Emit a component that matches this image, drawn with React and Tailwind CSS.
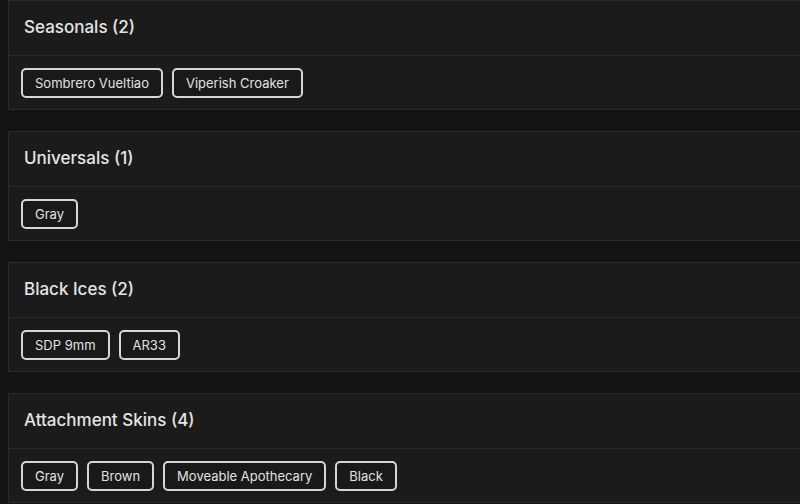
const sections = [
  { title: 'Seasonals', items: ['Sombrero Vueltiao', 'Viperish Croaker'] },
  { title: 'Universals', items: ['Gray'] },
  { title: 'Black Ices', items: ['SDP 9mm', 'AR33'] },
  { title: 'Attachment Skins', items: ['Gray', 'Brown', 'Moveable Apothecary', 'Black'] },
];

const App = () => {
  return (
    <div
      className="h-[504px] w-full overflow-hidden bg-[#131313] pl-2"
      style={{ fontFamily: 'Inter, "Noto Sans", sans-serif' }}
    >
      <div className="flex w-[820px] flex-col gap-[21px]">
        {sections.map((section) => (
          <div key={section.title} className="border border-[#2a2a2a] bg-[#1b1b1b]">
            {/* Header */}
            <div className="flex h-[55px] items-center border-b border-[#2a2a2a] px-[15px]">
              <h2 className="text-[17px] font-medium text-[#e4e4e4]">
                {section.title} ({section.items.length})
              </h2>
            </div>
            {/* Items */}
            <div className="flex gap-[9px] px-3 pt-3 pb-[11px]">
              {section.items.map((item, i) => (
                <button
                  key={i}
                  className="h-[30px] rounded-[5px] border-2 border-[#d6d6d6] bg-[#191919] px-3 text-[13px] leading-[18px] text-[#e2e2e2]"
                >
                  {item}
                </button>
              ))}
            </div>
          </div>
        ))}
      </div>
    </div>
  );
};

export default App;
